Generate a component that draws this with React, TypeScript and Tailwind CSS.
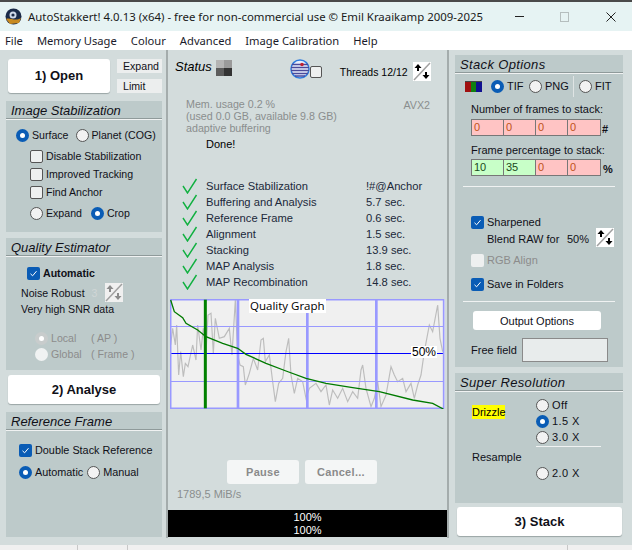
const points = {
  noise:
    "14,150 20,100 28,150 32,90 38,240 44,170 52,245 58,205 66,215 80,150 90,195 95,90 105,165 112,100 120,175 126,60 135,55 142,175 148,70 160,130 175,125 190,100 198,180 208,15 215,180 222,210 232,215 238,270 250,235 262,190 275,225 285,135 292,130 298,200 310,180 320,260 328,320 338,265 350,250 360,170 368,130 375,240 385,295 395,250 410,260 420,310 430,280 450,265 465,290 480,270 490,330 500,285 515,310 530,280 545,320 560,290 575,310 585,225 590,210 600,280 615,335 625,310 635,260 645,335 660,300 675,215 685,240 695,260 710,250 720,290 735,265 745,310 755,270 765,240 775,170 790,90 800,110 815,30 822,130 830,170",
  quality:
    "14,15 25,50 50,68 60,85 95,105 120,125 170,145 215,160 240,178 300,205 360,228 420,250 480,265 560,278 640,290 740,315 800,325 832,342",
};

function Radio({ label, on, off, className }: { label?: string; on?: boolean; off?: boolean; className?: string }) {
  return (
    <label className={"flex items-center gap-[3px] shrink-0 " + (className ?? "")}>
      {on ? (
        <span className={"w-[13px] h-[13px] rounded-full flex items-center justify-center shrink-0 " + (off ? "bg-[#c8cccc]" : "bg-[#0a5cb5]")}>
          <span className="w-[5px] h-[5px] rounded-full bg-white" />
        </span>
      ) : (
        <span className={"w-[13px] h-[13px] rounded-full shrink-0 " + (off ? "bg-[#f0f2f2]" : "bg-[#f2f2f2] border border-[#555]")} />
      )}
      {label && <span className={"whitespace-nowrap " + (off ? "text-[#8c8c8c]" : "")}>{label}</span>}
    </label>
  );
}

function Check({ label, on, off, bold }: { label: string; on?: boolean; off?: boolean; bold?: boolean }) {
  return (
    <label className="flex items-center gap-[3px]">
      {on ? (
        <span className="w-[13px] h-[13px] rounded-[2px] bg-[#0a5cb5] flex items-center justify-center shrink-0">
          <svg width="9" height="9" viewBox="0 0 9 9" fill="none" stroke="white" strokeWidth="1">
            <path d="M1.5 4.8 L3.6 6.8 L7.5 2.2" />
          </svg>
        </span>
      ) : (
        <span className={"w-[13px] h-[13px] rounded-[2px] shrink-0 " + (off ? "bg-[#eef0f0]" : "bg-[#eef0f0] border border-[#555]")} />
      )}
      <span className={"whitespace-nowrap " + (off ? "text-[#8c8c8c] " : "") + (bold ? "font-bold" : "")}>{label}</span>
    </label>
  );
}

function Spin({ muted, className }: { muted?: boolean; className?: string }) {
  const c = muted ? "#8a8a8a" : "#000000";
  return (
    <svg width="18" height="19" viewBox="0 0 18 19" className={"shrink-0 " + (className ?? "")}>
      <rect width="18" height="19" fill={muted ? "#f0f0f0" : "#ffffff"} />
      <path d="M1 18 L17 1" stroke="#a0a0a0" strokeWidth="1.5" />
      <path d="M5 2 L8.5 6 L6 6 L6 9 L4 9 L4 6 L1.5 6 Z" fill={c} />
      <path d="M13 17 L9.5 13 L12 13 L12 10 L14 10 L14 13 L16.5 13 Z" fill={c} />
    </svg>
  );
}

function Panel({ title, wide, className, children }: { title: string; wide?: boolean; className: string; children: React.ReactNode }) {
  return (
    <section className={"bg-[#bdcaca] " + className}>
      <h2 className={"h-[19px] italic text-[13px] leading-[20px] pl-[5px] border-b border-[#f0f2f2] shadow-[inset_0_-1px_0_#8f9a9a] " + (wide ? "tracking-[0.35px]" : "")}>
        {title}
      </h2>
      {children}
    </section>
  );
}

function BigButton({ children, className }: { children: React.ReactNode; className: string }) {
  return (
    <button className={"bg-white rounded-[3px] font-bold text-[13px] shadow-[0_1px_1px_#9aa5a5] " + className}>
      {children}
    </button>
  );
}

function Cell({ v, good }: { v: string; good?: boolean }) {
  return (
    <span className={"w-[32px] h-full border-r border-[#777] last:border-r-0 pl-[2px] leading-[15px] " + (good ? "bg-[#c8ffc8] text-[#1a4a1a]" : "bg-[#ffc4c4] text-[#c0501a]")}>
      {v}
    </span>
  );
}

function Globe() {
  return (
    <svg width="20" height="20" viewBox="0 0 20 20" className="shrink-0">
      <circle cx="10" cy="10" r="9" fill="#e8eefc" stroke="#2f7de0" strokeWidth="1.5" />
      <path d="M2 5.5 H18 M1 8.5 H19 M1 11.5 H19 M2 14.5 H18 M5 17 H15" stroke="#4a4a9a" strokeWidth="1.6" />
      <circle cx="12" cy="5.5" r="1.8" fill="#c02030" />
    </svg>
  );
}

function Logo() {
  return (
    <svg width="17" height="17" viewBox="0 0 17 17" className="shrink-0">
      <circle cx="8.5" cy="8.5" r="8" fill="#1a2a48" />
      <path d="M1 11 C5 9 10 14 16 10 L14 15 L5 16 Z" fill="#c88a20" />
      <circle cx="8" cy="7" r="3.5" fill="#cfd8e8" />
      <circle cx="8" cy="7" r="1.6" fill="#1a2a48" />
    </svg>
  );
}

function QualityGraph() {
  return (
    <div className="relative ml-[2px] w-[275px] h-[110px] bg-[#f0f0f0]">
      <svg width="275" height="110" viewBox="12 12 825 330" preserveAspectRatio="none" className="block">
        <polyline points={points.noise} fill="none" stroke="#bdbdbd" strokeWidth="3.5" />
        <path d="M14 94.5 H833 M14 259.5 H833" stroke="#9999ff" strokeWidth="3" shapeRendering="crispEdges" />
        <path d="M216 14 V340 M424 14 V340 M631 14 V340" stroke="#9999ff" strokeWidth="8" />
        <path d="M14 175.5 H833" stroke="#0000ff" strokeWidth="3" shapeRendering="crispEdges" />
        <rect x="14" y="14" width="819" height="326" fill="none" stroke="#9999ff" strokeWidth="5" />
        <path d="M118 14 V340" stroke="#008000" strokeWidth="9" />
        <polyline points={points.quality} fill="none" stroke="#007a00" strokeWidth="4" />
      </svg>
      <span className="absolute left-[79px] top-0 h-[14px] px-[1px] bg-white text-[11.5px] leading-[14px] font-['Open_Sans',sans-serif] text-black">
        Quality Graph
      </span>
      <span className="absolute left-[241px] top-[47px] h-[12px] px-[1px] bg-white text-[12px] leading-[12px] text-black">50%</span>
    </div>
  );
}

export default function App() {
  const steps = [
    ["Surface Stabilization", "!#@Anchor"],
    ["Buffering and Analysis", "5.7 sec."],
    ["Reference Frame", "0.6 sec."],
    ["Alignment", "1.5 sec."],
    ["Stacking", "13.9 sec."],
    ["MAP Analysis", "1.8 sec."],
    ["MAP Recombination", "14.8 sec."],
  ];

  return (
    <div className="w-[632px] h-[550px] overflow-hidden flex flex-col bg-[#d3dcdc] text-[#101018] text-[11px] leading-[14px] font-['Liberation_Sans',Arial,sans-serif]">
      <header className="h-[31px] shrink-0 bg-[#e6f3f3] border-t-2 border-[#4a4a4a] flex items-center pl-[5px] text-[#1a1a1a] text-[11.4px] font-['Noto_Sans',sans-serif]">
        <Logo />
        <span className="ml-[6px] w-[470px] whitespace-nowrap">
          AutoStakkert! 4.0.13 (x64) - free for non-commercial use © Emil Kraaikamp 2009-2025
        </span>
        <span className="ml-[17px] w-[9px] h-px bg-[#222]" />
        <span className="ml-[36px] w-[9px] h-[10px] border border-[#b5bebe]" />
        <svg width="10" height="10" viewBox="0 0 10 10" className="ml-[37px]" stroke="#222" strokeWidth="1">
          <path d="M0.5 0.5 L9.5 9.5 M9.5 0.5 L0.5 9.5" />
        </svg>
      </header>

      <nav className="h-[19px] shrink-0 bg-white flex items-center pl-[5px] gap-[14px] text-[11.2px] text-[#1a1a2a] font-['Noto_Sans',sans-serif]">
        <span>File</span>
        <span>Memory Usage</span>
        <span>Colour</span>
        <span>Advanced</span>
        <span>Image Calibration</span>
        <span>Help</span>
      </nav>

      <main className="h-[495px] shrink-0 flex items-start">
        <div className="w-[166px] shrink-0 pl-[6px] pt-[9px] text-[10.6px]">
          <div className="flex pl-[2px] h-[34px]">
            <BigButton className="w-[102px] h-[34px]">1) Open</BigButton>
            <div className="ml-[7px] w-[45px] flex flex-col justify-between">
              <span className="h-[14px] bg-[#eceeee] pl-[6px] leading-[14px]">Expand</span>
              <span className="h-[14px] bg-[#eceeee] pl-[6px] leading-[14px]">Limit</span>
            </div>
          </div>

          <Panel title="Image Stabilization" className="w-[156px] h-[131px] mt-[8px]">
            <div className="flex pl-[10px] pt-[8px] gap-[7px]">
              <Radio label="Surface" on />
              <Radio label="Planet (COG)" />
            </div>
            <div className="flex flex-col pl-[24px] mt-[7px] gap-[4px]">
              <Check label="Disable Stabilization" />
              <Check label="Improved Tracking" />
              <Check label="Find Anchor" />
            </div>
            <div className="flex pl-[24px] mt-[7px] gap-[9px]">
              <Radio label="Expand" />
              <Radio label="Crop" on />
            </div>
          </Panel>

          <Panel title="Quality Estimator" className="w-[156px] h-[132px] mt-[6px]">
            <div className="pl-[21px] pt-[9px]">
              <Check label="Automatic" on bold />
            </div>
            <div className="flex items-center pl-[15px] mt-[3px] h-[19px]">
              <span>Noise Robust</span>
              <span className="ml-[7px] text-[#d0d6d6]">3</span>
              <Spin muted className="ml-[7px]" />
            </div>
            <div className="pl-[15px]">Very high SNR data</div>
            <div className="flex flex-col pl-[29px] mt-[15px] gap-[2px] text-[#8c8c8c]">
              <div className="flex">
                <Radio label="Local" on off className="w-[56px]" />
                <span>( AP )</span>
              </div>
              <div className="flex">
                <Radio label="Global" off className="w-[56px]" />
                <span>( Frame )</span>
              </div>
            </div>
          </Panel>

          <BigButton className="block ml-[2px] w-[152px] h-[29px] mt-[5px]">2) Analyse</BigButton>

          <Panel title="Reference Frame" className="w-[156px] h-[125px] mt-[8px]">
            <div className="pl-[13px] pt-[12px] text-[10.85px]">
              <Check label="Double Stack Reference" on />
            </div>
            <div className="flex pl-[13px] mt-[8px] gap-[4px] text-[10.85px]">
              <Radio label="Automatic" on />
              <Radio label="Manual" />
            </div>
          </Panel>
        </div>

        <div className="w-[283px] h-[488px] shrink-0 border-x-2 border-[#a4acac]">
          <div className="relative h-[48px] flex items-start">
            <span className="ml-[7px] mt-[9px] italic text-[13px] leading-[16px] text-black">Status</span>
            <div className="ml-[4px] mt-[10px] grid grid-cols-2 w-[16px] h-[16px]">
              <span className="bg-[#b4b4b4]" />
              <span className="bg-[#9a9a9a]" />
              <span className="bg-[#5c5c5c]" />
              <span className="bg-[#333]" />
            </div>
            <div className="ml-[58px] mt-[9px] flex items-start">
              <Globe />
              <span className="mt-[7px] w-[12px] h-[12px] rounded-[2px] bg-[#eef0f0] border border-[#555]" />
            </div>
            <span className="ml-[18px] mt-[15px] text-[10.5px] text-black whitespace-nowrap">Threads 12/12</span>
            <Spin className="ml-[5px] mt-[12px]" />
          </div>

          <div className="flex justify-between h-[42px] mt-[-1px] pl-[18px] pr-[17px] pt-[1px] text-[#8a8e8e] text-[10.7px]">
            <div className="leading-[12px]">
              <div>Mem. usage 0.2 %</div>
              <div>(used 0.0 GB, available 9.8 GB)</div>
              <div>adaptive buffering</div>
            </div>
            <span className="leading-[14px]">AVX2</span>
          </div>
          <div className="pl-[38px] mt-[-2px] h-[14px] text-black">Done!</div>

          <ul className="mt-[27px] flex flex-col text-[11.2px]">
            {steps.map(([name, time]) => (
              <li key={name} className="h-[16px] flex items-center pl-[14px] text-[#20283a]">
                <svg width="16" height="16" viewBox="0 0 16 16" fill="none" stroke="#10b040" strokeWidth="1.4" className="shrink-0 -mt-[1px]">
                  <path d="M1 8 L5.5 15 L14.5 1" />
                </svg>
                <span className="ml-[8px] w-[160px]">{name}</span>
                <span>{time}</span>
              </li>
            ))}
          </ul>

          <div className="mt-[9px]">
            <QualityGraph />
          </div>

          <div className="flex gap-[6px] mt-[51px] pl-[59px]">
            <button className="w-[72px] h-[24px] bg-[#f4f6f6] rounded-[3px] font-bold tracking-[0.3px] text-[#8a8a8a]">Pause</button>
            <button className="w-[72px] h-[24px] bg-[#f4f6f6] rounded-[3px] font-bold tracking-[0.3px] text-[#8a8a8a]">Cancel...</button>
          </div>
          <div className="pl-[9px] mt-[3px] h-[23px] text-[#8a8e8e]">1789,5 MiB/s</div>
          <div className="h-[27px] bg-black text-white text-center text-[11px] leading-[13px] pt-[1px]">
            <div>100%</div>
            <div>100%</div>
          </div>
        </div>

        <div className="w-[183px] shrink-0 pl-[6px] pt-[5px]">
          <Panel title="Stack Options" wide className="w-[168px] h-[312px]">
            <div className="flex items-center pl-[10px] h-[22px] mt-[1px]">
              <span className="w-[17px] h-[11px] flex shrink-0 border-t border-[#444]">
                <span className="w-1/3 bg-[#a01010]" />
                <span className="w-1/3 bg-[#108010]" />
                <span className="w-1/3 bg-[#101090]" />
              </span>
              <Radio label="TIF" on className="ml-[9px] w-[38px]" />
              <Radio label="PNG" className="w-[44px]" />
              <span className="w-px h-[21px] bg-[#dfe4e4]" />
              <Radio label="FIT" className="ml-[5px]" />
            </div>
            <div className="pl-[16px] mt-[5px] h-[14px]">Number of frames to stack:</div>
            <div className="flex items-center pl-[16px] mt-[2px]">
              <div className="flex h-[17px] border border-[#777]">
                <Cell v="0" />
                <Cell v="0" />
                <Cell v="0" />
                <Cell v="0" />
              </div>
              <span className="ml-[1px] mt-[4px] font-bold">#</span>
            </div>
            <div className="pl-[16px] mt-[7px] h-[14px]">Frame percentage to stack:</div>
            <div className="flex items-center pl-[16px] mt-[1px]">
              <div className="flex h-[17px] border border-[#777]">
                <Cell v="10" good />
                <Cell v="35" good />
                <Cell v="0" />
                <Cell v="0" />
              </div>
              <span className="ml-[2px] mt-[4px] font-bold">%</span>
            </div>
            <div className="ml-[8px] mt-[10px] w-[152px] h-px bg-[#f0f2f2]" />

            <div className="pl-[16px] mt-[28px]">
              <Check label="Sharpened" on />
            </div>
            <div className="flex items-start pl-[32px] h-[20px]">
              <span className="mt-[3px] w-[80px] whitespace-nowrap">Blend RAW for</span>
              <span className="mt-[3px] w-[29px]">50%</span>
              <Spin className="-mt-[1px]" />
            </div>
            <div className="pl-[16px] mt-[4px]">
              <Check label="RGB Align" off />
            </div>
            <div className="pl-[16px] mt-[10px]">
              <Check label="Save in Folders" on />
            </div>
            <div className="ml-[8px] mt-[10px] w-[152px] h-px bg-[#f0f2f2]" />
            <button className="block ml-[18px] mt-[9px] w-[128px] h-[19px] bg-white rounded-[3px] text-[#101018]">
              Output Options
            </button>
            <div className="flex items-center pl-[16px] mt-[8px]">
              <span className="w-[51px]">Free field</span>
              <span className="w-[86px] h-[24px] bg-[#e8ecec] border border-[#8a8a8a]" />
            </div>
          </Panel>

          <Panel title="Super Resolution" wide className="w-[168px] h-[130px] mt-[6px]">
            <div className="flex pl-[17px]">
              <div className="w-[64px]">
                <span className="block mt-[13px] w-[33px] h-[14px] bg-[#ffff00] text-black">Drizzle</span>
                <span className="block mt-[31px]">Resample</span>
              </div>
              <div className="pt-[6px]">
                <div className="flex flex-col gap-[2px] tracking-[0.4px]">
                  <Radio label="Off" />
                  <Radio label="1.5 X" on />
                  <Radio label="3.0 X" />
                </div>
                <div className="mt-[2px] w-[65px] h-px bg-[#f0f2f2]" />
                <div className="mt-[19px] tracking-[0.4px]">
                  <Radio label="2.0 X" />
                </div>
              </div>
            </div>
          </Panel>

          <BigButton className="block ml-[2px] mt-[4px] w-[165px] h-[29px]">3) Stack</BigButton>
        </div>
      </main>

      <footer className="flex-1 bg-[#f0f0f0] flex">
        <span className="w-[78px] border-r border-[#c8c8c8]" />
        <span className="w-[50px] border-r border-[#c8c8c8]" />
        <span className="w-[440px] border-r border-[#c8c8c8]" />
      </footer>
    </div>
  );
}
